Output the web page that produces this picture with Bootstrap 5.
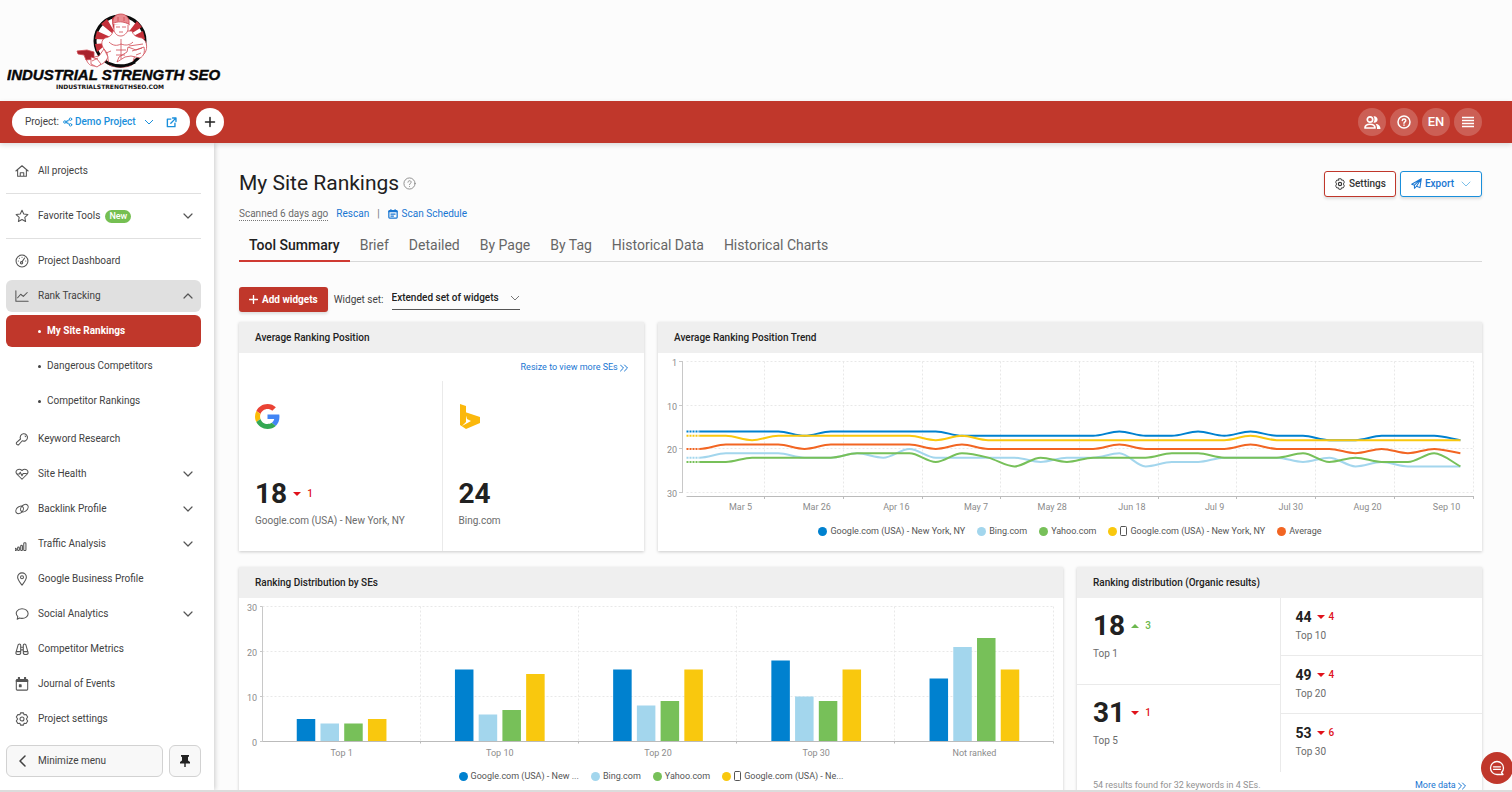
<!DOCTYPE html>
<html lang="en">
<head>
<meta charset="utf-8">
<meta name="viewport" content="width=device-width, initial-scale=1">
<title>My Site Rankings</title>
<link rel="stylesheet" href="https://cdn.jsdelivr.net/npm/bootstrap@5.3.0/dist/css/bootstrap.min.css">
<style>
:root { --brand:#c0372b; --link:#1976d2; --sky:#1a8fdb; --ink:#212121; --body:#424242; --muted:#6b6b6b; --faint:#929292; }
body { font-family:Roboto,"Liberation Sans",sans-serif; font-size:10px; line-height:16px; color:var(--body); background:#fcfcfc; height:100vh; overflow:hidden; border-bottom:2px solid #dcdcdc; }
a { text-decoration:none; color:var(--link); }
svg.ic { fill:none; stroke:currentColor; stroke-width:1.5; stroke-linecap:round; stroke-linejoin:round; flex:none; }
.brand-head { height:101px; padding-left:7px; }
.topbar { background:var(--brand); height:42px; padding:0 30px 0 12px; box-shadow:0 2px 5px rgba(0,0,0,.14); z-index:3; gap:6px; }
.project-pill { background:#fff; height:28px; padding:0 13px; border-radius:14px; color:var(--body); }
.bare-select { border:0; background-color:transparent; padding:0 20px 0 0; font-size:10px; line-height:16px; appearance:none; background-repeat:no-repeat; background-position:right center; background-size:10px 10px; }
.project-select { color:var(--sky); font-weight:500; padding-right:18px; margin-left:2px; background-image:url("data:image/svg+xml,%3Csvg xmlns='http://www.w3.org/2000/svg' viewBox='0 0 10 10' fill='none' stroke='%231a8fdb'%3E%3Cpath d='M1 3l4 4 4-4'/%3E%3C/svg%3E"); }
.widget-select { color:var(--ink); font-weight:500; border-bottom:1px solid #555; padding-bottom:3px; margin-left:2px; background-image:url("data:image/svg+xml,%3Csvg xmlns='http://www.w3.org/2000/svg' viewBox='0 0 10 10' fill='none' stroke='%23777'%3E%3Cpath d='M1 2l4 4 4-4'/%3E%3C/svg%3E"); }
.round-btn { width:28px; height:28px; border:0; padding:0; border-radius:50%; background:rgba(255,255,255,.2); color:#fff; font-size:13px; font-weight:500; }
.round-btn.plus { background:#fff; color:#222; }
.sidebar { width:214px; background:#fff; padding:12px 13px 0 6px; box-shadow:1px 0 5px rgba(0,0,0,.2); z-index:2; }
.side-link { height:32px; margin-bottom:3px; padding:0 8px 0 9px; border-radius:6px; color:var(--body); gap:9px; }
.side-link svg { color:#555; }
.side-link.open { background:#e0e0e0; }
.side-sub { padding-left:32px; gap:6px; }
.side-sub::before { content:""; width:3px; height:3px; border-radius:50%; background:currentColor; }
.side-sub.current { background:var(--brand); color:#fff; font-weight:700; }
.group-end { margin-bottom:6px; }
.side-rule { border-top:1px solid #e0e0e0; margin:6px 0; }
.badge-new { background:#75bf52; color:#fff; font-size:9px; line-height:13px; padding:0 4px; border-radius:7px; font-weight:500; margin-left:-4px; }
.side-foot { margin-top:10px; gap:6px; }
.side-btn { height:32px; border:1px solid #d2d2d2; background:#f8f8f8; border-radius:6px; color:var(--body); padding:0 9px; }
.main-area { padding:27px 30px 0 25px; overflow:hidden; min-width:0; }
.page-title { font-size:21px; line-height:27px; font-weight:400; color:var(--ink); }
.act-btn { height:26px; background:#fff; border:1px solid var(--brand); border-radius:3px; padding:0 9px; font-weight:500; color:#333; gap:3px; box-shadow:0 2px 3px rgba(0,0,0,.12); }
.act-btn.export { border-color:var(--sky); color:var(--link); padding:0 10px; }
.meta-line { margin-top:9px; gap:8px; }
.scanned { border-bottom:1px dotted #777; color:var(--muted); line-height:13px; }
.tabs-line { border-bottom:1px solid #d8d8d8; margin-top:7px; }
.tab-link { font-size:14px; line-height:30px; color:#666; padding:1px 10px 0; margin-bottom:-1px; border-bottom:2px solid transparent; }
.tab-link.current { color:var(--ink); font-weight:500; border-color:#cf3a32; }
.widget-bar { gap:6px; margin-top:25px; }
.add-btn { height:25px; background:var(--brand); color:#fff; border:0; border-radius:3px; padding:0 10px; font-weight:700; gap:4px; box-shadow:0 2px 3px rgba(0,0,0,.12); }
.widgets { --bs-gutter-x:14px; --bs-gutter-y:16px; margin-top:-6px; }
.panel { background:#fff; height:229px; box-shadow:0 1px 3px rgba(0,0,0,.2); }
.panel h2 { font-size:10px; line-height:31px; font-weight:500; margin:0; padding-left:16px; background:#efefef; color:#222; }
.chart svg { display:block; width:100%; }
.chart text { font-size:9px; fill:#8c8c8c; font-family:Roboto,"Liberation Sans",sans-serif; }
.legend-line { font-size:9px; line-height:12px; color:#555; gap:12px; }
.legend-line i { width:9px; height:9px; border-radius:50%; flex:none; }
.legend-line span { gap:3px; }
.small-link { font-size:9px; line-height:12px; }
.more-row { padding-top:7px; }
.engine-cell { padding:23px 15px 0 16px; }
.engine-num { margin-top:49px; }
.engine-name { margin-top:3px; }
.big-num { font-size:28px; line-height:32px; font-weight:700; color:var(--ink); }
.mid-num { font-size:14px; line-height:18px; font-weight:700; color:var(--ink); }
.num-row { gap:6px; }
.delta { font-size:10px; line-height:12px; font-weight:500; gap:6px; }
.down { color:#e0121b; } .up { color:#6cb84e; }
.delta::before { content:""; border:4px solid transparent; border-bottom-width:0; border-top-color:currentColor; }
.delta.up::before { border:4px solid transparent; border-top-width:0; border-bottom-color:currentColor; }
.big-cell { height:87px; padding:12px 16px 0; }
.small-cell { height:58px; padding:10px 15px 0; }
.small-cell .num-row { gap:5px; }
.small-cell .delta { gap:4px; }
.small-cell .muted { margin-top:2px; }
.muted { color:var(--muted); } .faint { color:var(--faint); }
.rule-l { border-left:1px solid #eaeaea; } .rule-b { border-bottom:1px solid #eaeaea; }
.chat-btn { position:fixed; right:-1px; bottom:8px; width:32px; height:32px; border-radius:50%; border:0; padding:0; background:var(--brand); color:#fff; z-index:5; }
</style>
</head>
<body class="d-flex flex-column">

<header class="brand-head flex-shrink-0">
  <svg width="216" height="98" viewBox="0 0 216 98" role="img" aria-label="Industrial Strength SEO">
    <g transform="translate(-7 0)">
      <circle cx="120" cy="41" r="25" fill="#fff" stroke="#0a0a0a" stroke-width="3"/>
      <g fill="#c4303a">
        <path d="M118 38L101 24l6-5zM117 40L97 31l-2 8zM124 38l13-17 5 6zM126 40l17-9 2 8zM108 43l-13 1 2 8zM113 30l-1-12 5-2zM136 45l9-2v6z"/>
      </g>
      <g fill="#fff" stroke="#cf4650" stroke-width=".8" stroke-linejoin="round">
        <path d="M113 31c-1 4-3 6-8 7-4 2-4 7-1 11l3 4 2 12c7 3 17 3 23 0l3-10 8 0c5-4 5-14-1-17-6-1-9-3-10-7z"/>
        <path d="M114 24v7c2 4 4 5 7 5s6-3 7-6v-7z"/>
        <path d="M113 24c-1-7 3-10 8-10s9 4 8 10c-5-2-11-2-16 0z" fill="#e88b90"/>
        <path d="M112 24c5-3 12-3 18 1"/>
        <path d="M104 49l-5 7-13 3c2 5 4 7 9 7 6 0 11-4 13-9z"/>
        <path d="M77 51l10-1 7 2v7l-8 1-2-5-6-1z" fill="#a8222c"/>
        <path d="M91 57l6 2 4 5-4 3-6-3z"/>
        <path d="M117 62l8-5 6-1 9 2c4-2 5-6 4-11l-8 3-8-3-1 5-8 5z"/>
        <path d="M129 46l14-2M132 51l10-3M121 39v20M109 42c4 4 8 4 12 2 5 2 9 1 12-2M116 50h10M116 55h9M116 27h4M122 27h4M119 32h4M118 17v4M124 17v4M106 53l5-2M92 61l6-3M136 55l5-2" fill="none"/>
      </g>
      <path d="M108 63c9 4 18 4 27-1" fill="none" stroke="#0a0a0a" stroke-width="3"/>
    </g>
    <text x="0" y="80" font-family="Liberation Sans, sans-serif" font-size="15" font-weight="700" font-style="italic" fill="#080808" stroke="#080808" stroke-width=".4">INDUSTRIAL STRENGTH SEO</text>
    <text x="49" y="89" font-family="DejaVu Sans, sans-serif" font-size="6" font-weight="700" fill="#111">INDUSTRIALSTRENGTHSEO.COM</text>
  </svg>
</header>

<div class="topbar d-flex align-items-center flex-shrink-0 position-relative">
  <div class="project-pill d-flex align-items-center">
    <label for="project">Project:</label>
    <svg class="ic ms-1" style="color:#1a8fdb" width="10" height="10" viewBox="0 0 16 16"><circle cx="3" cy="8" r="2"/><circle cx="12" cy="3.500" r="2"/><circle cx="12" cy="12.500" r="2"/><path d="M5 7l5-2.500M5 9l5 2.500M5 8h3"/></svg>
    <select id="project" class="bare-select project-select"><option>Demo Project</option></select>
    <a href="#" class="d-flex ms-2 ps-1" aria-label="Open project" style="color:#1a8fdb"><svg class="ic" width="11" height="11" viewBox="0 0 16 16"><path d="M7 3H2v11h11V9M9.500 1.500h5v5M14 2L7 9" stroke-width="2"/></svg></a>
  </div>
  <button class="round-btn plus d-flex align-items-center justify-content-center" aria-label="Add project"><svg class="ic" width="12" height="12" viewBox="0 0 12 12"><path d="M6 1.500v9M1.500 6h9"/></svg></button>
  <div class="d-flex ms-auto gap-1">
    <button class="round-btn d-flex align-items-center justify-content-center" aria-label="Users"><svg class="ic" width="17" height="15" viewBox="0 0 17 15"><circle cx="6" cy="4.500" r="2.700" stroke-width="1.700"/><path d="M1 13c0-5 10-5 10 0z" stroke-width="1.700"/><path d="M9.500 1.300a3.300 3.300 0 1 1 0 6.400c1.300-2 1.300-4.400 0-6.400zM11.500 8.700c3.500.3 5 2.300 5 5.300H13c0-2-.2-3.800-1.500-5.300z" fill="currentColor" stroke="none"/></svg></button>
    <button class="round-btn d-flex align-items-center justify-content-center" aria-label="Help"><svg class="ic" width="14" height="14" viewBox="0 0 14 14"><circle cx="7" cy="7" r="6"/><path d="M5.300 5.600c0-2.200 3.500-2.200 3.500 0C8.800 6.800 7 6.900 7 8.200M7 10.100v.1"/></svg></button>
    <button class="round-btn">EN</button>
    <button class="round-btn d-flex align-items-center justify-content-center" aria-label="Menu"><svg class="ic" width="12" height="12" viewBox="0 0 12 12"><path d="M0 1.500h12M0 4.500h12M0 7.500h12M0 10.500h12" stroke-linecap="butt"/></svg></button>
  </div>
</div>

<div class="d-flex flex-grow-1 overflow-hidden">
<nav class="sidebar flex-shrink-0" id="sidebar" aria-label="Main"></nav>

<main class="main-area flex-grow-1">
  <div class="d-flex align-items-center">
    <h1 class="page-title m-0">My Site Rankings</h1>
    <svg class="ic ms-1" style="color:#888" width="13" height="13" viewBox="0 0 14 14"><g stroke-width="1"><circle cx="7" cy="7" r="6"/><path d="M5.300 5.600c0-2.200 3.500-2.200 3.500 0C8.800 6.800 7 6.900 7 8.200M7 10.100v.1"/></g></svg>
    <button class="act-btn ms-auto d-flex align-items-center"><svg class="ic" width="12" height="12" viewBox="0 0 16 16"><path stroke-width="1.200" d="M6.500 1h3l.6 2 2.100-.3 1.600 2.700L12.500 8l1.300 2.600-1.600 2.700-2.100-.3-.6 2h-3l-.6-2-2.100.3-1.600-2.700L3.500 8 2.200 5.400l1.600-2.700 2.100.3z"/><circle cx="8" cy="8" r="2.200"/></svg>Settings</button>
    <button class="act-btn export ms-1 d-flex align-items-center"><svg class="ic" width="11" height="11" viewBox="0 0 16 16"><path d="M1 9l14-8-2 13-5-2-3 3v-4.500zM5 10.500L15 1 8 12"/></svg>Export<svg class="ic ms-1" width="10" height="10" viewBox="0 0 10 10" style="color:#7cc0ea"><path d="M1 3l4 4 4-4" stroke-width="1"/></svg></button>
  </div>
  <div class="meta-line d-flex align-items-center">
    <span class="scanned">Scanned 6 days ago</span>
    <a href="#">Rescan</a><span class="text-secondary">|</span>
    <a href="#" class="d-flex align-items-center"><svg class="ic me-1" width="10" height="10" viewBox="0 0 12 12"><rect x="1" y="2" width="10" height="9" rx="1"/><path d="M1 3h10M3.500 .8v2M8.500 .8v2M3.500 6h5M3.500 8.500h3"/></svg>Scan Schedule</a>
  </div>
  <nav class="tabs-line d-flex" aria-label="Reports">
    <a class="tab-link current" href="#">Tool Summary</a><a class="tab-link" href="#">Brief</a><a class="tab-link" href="#">Detailed</a><a class="tab-link" href="#">By Page</a><a class="tab-link" href="#">By Tag</a><a class="tab-link" href="#">Historical Data</a><a class="tab-link" href="#">Historical Charts</a>
  </nav>
  <div class="widget-bar d-flex align-items-center">
    <button class="add-btn d-flex align-items-center"><svg class="ic" width="9" height="9" viewBox="0 0 10 10"><path d="M5 .5v9M.5 5h9"/></svg>Add widgets</button>
    <label for="wset">Widget set:</label>
    <select id="wset" class="bare-select widget-select"><option>Extended set of widgets</option></select>
  </div>

  <div class="row widgets">
    <section class="col-4"><div class="panel d-flex flex-column">
      <h2>Average Ranking Position</h2>
      <div class="text-end px-3 pt-2"><a href="#" class="small-link d-block">Resize to view more SEs <svg class="ic" width="8" height="8" viewBox="0 0 8 8"><path d="M.5 1l3 3-3 3M4.500 1l3 3-3 3" stroke-width="1"/></svg></a></div>
      <div class="d-flex flex-grow-1 mt-2">
        <div class="col-6 engine-cell d-flex flex-column">
          <svg width="25" height="25" viewBox="0 0 48 48"><path fill="#EA4335" d="M24 9.500c3.540 0 6.710 1.220 9.210 3.600l6.850-6.850C35.900 2.380 30.470 0 24 0 14.620 0 6.510 5.380 2.560 13.220l7.980 6.190C12.430 13.720 17.740 9.500 24 9.500z"/><path fill="#4285F4" d="M46.980 24.550c0-1.570-.15-3.090-.38-4.550H24v9.020h12.940c-.58 2.960-2.260 5.480-4.780 7.180l7.730 6c4.510-4.180 7.090-10.360 7.090-17.650z"/><path fill="#FBBC05" d="M10.530 28.590c-.48-1.450-.76-2.990-.76-4.590s.27-3.140.76-4.590l-7.980-6.190C.92 16.460 0 20.120 0 24c0 3.880.92 7.540 2.560 10.780l7.970-6.190z"/><path fill="#34A853" d="M24 48c6.480 0 11.930-2.130 15.890-5.810l-7.730-6c-2.150 1.450-4.920 2.300-8.160 2.300-6.260 0-11.570-4.220-13.470-9.910l-7.980 6.190C6.510 42.620 14.620 48 24 48z"/></svg>
          <div class="engine-num num-row d-flex align-items-center"><span class="big-num">18</span><span class="delta down d-flex align-items-center">1</span></div>
          <div class="engine-name muted">Google.com (USA) - New York, NY</div>
        </div>
        <div class="col-6 engine-cell rule-l d-flex flex-column">
          <svg width="25" height="25" viewBox="0 0 25 25"><path fill="#fbb80c" d="M1 0l6 2v16l-4 4 9-5-4-2-2-7 15 5v6L7 25l-6-4z"/></svg>
          <div class="engine-num num-row d-flex"><span class="big-num">24</span></div>
          <div class="engine-name muted">Bing.com</div>
        </div>
      </div>
    </div></section>

    <section class="col-8"><div class="panel">
      <h2>Average Ranking Position Trend</h2>
      <div class="chart" id="trend"></div>
      <div class="legend-line d-flex justify-content-center" id="legendTrend"></div>
    </div></section>

    <section class="col-8"><div class="panel">
      <h2>Ranking Distribution by SEs</h2>
      <div class="chart" id="bars"></div>
      <div class="legend-line d-flex justify-content-center" id="legendBars"></div>
    </div></section>

    <section class="col-4"><div class="panel">
      <h2>Ranking distribution (Organic results)</h2>
      <div class="d-flex">
        <div class="col-6" id="bigCells"></div>
        <div class="col-6 rule-l" id="smallCells"></div>
      </div>
      <div class="more-row d-flex px-3 small-link"><span class="faint">54 results found for 32 keywords in 4 SEs.</span><a href="#" class="ms-auto">More data <svg class="ic" width="8" height="8" viewBox="0 0 8 8"><path d="M.5 1l3 3-3 3M4.500 1l3 3-3 3" stroke-width="1"/></svg></a></div>
    </div></section>
  </div>
</main>
</div>

<button class="chat-btn d-flex align-items-center justify-content-center" aria-label="Chat"><svg class="ic" width="16" height="16" viewBox="0 0 16 16"><path d="M14 14.500H8A6.500 6.500 0 1 1 14.500 8c0 2-.7 3.300-2 4.500zM4.500 6.800h7M4.500 9.300h7" stroke-width="1.300"/></svg></button>

<script src="https://cdn.jsdelivr.net/npm/bootstrap@5.3.0/dist/js/bootstrap.bundle.min.js"></script>
<script>
const icons = {
  home:'<path d="M1 8l7-6 7 6M3 7v7h10V7M6 14v-4h4v4"/>',
  star:'<path d="M8 1.500l2 4.300 4.700.6-3.500 3.200.9 4.700L8 12l-4.100 2.300.9-4.700L1.300 6.400 6 5.800z"/>',
  dash:'<circle cx="8" cy="8" r="6.800"/><circle cx="7.500" cy="10" r="1.300"/><path d="M8 9l3-4.500M3.800 8h.1M5 4.800h.1M8 3.700h.1M12.200 8h.1"/>',
  line:'<path d="M1 2v12h14M3 10l3.500-4 3 2.500L14 4"/>',
  key:'<path d="M6.300 8a4.200 4.200 0 1 1 2 2L4.500 14.300c-1.500 1.200-4-.8-2.600-2.400z"/><path d="M11.500 4.500a1 1 0 0 1 .8.900"/>',
  heart:'<path d="M8 14L2 8C-.5 4.500 4 .5 8 4c4-3.500 8.500.5 6 4zM2.500 8H5l1-2 2 4 1.300-2.500H13"/>',
  link:'<ellipse cx="5.300" cy="9" rx="5" ry="3.500" transform="rotate(-45 5.300 9)"/><ellipse cx="10.700" cy="7" rx="5" ry="3.500" transform="rotate(-45 10.700 7)"/>',
  bars:'<rect x="0" y="13" width="1.500" height="2.500" rx=".7"/><rect x="3" y="11.500" width="2" height="4" rx="1"/><rect x="6.500" y="9.500" width="2" height="6" rx="1"/><rect x="10" y="6.500" width="2.500" height="9" rx="1"/>',
  pin:'<path d="M8 15C5 11 3 8.800 3 6a5 5 0 0 1 10 0c0 2.800-2 5-5 9z"/><circle cx="8" cy="6" r="1.700"/>',
  chat:'<path d="M2.500 14l.7-3C-1 6.500 3 2 8 2c4 0 7 2.500 7 5.700S11.500 13 8 13c-1 0-2 0-2.800-.4z"/>',
  bino:'<path d="M3.500 3.500C3.500 2 6.500 2 6.500 3.500V12.500c0 2.500-5.500 2.500-5.500 0zM12.500 3.500C12.500 2 9.500 2 9.500 3.500V12.500c0 2.500 5.500 2.500 5.500 0zM6.500 6h3M6.500 9h3M1.200 11h5M9.800 11h5"/>',
  cal:'<rect x="1.500" y="3" width="13" height="12" rx="1"/><path d="M2 4.500h12M4.500 1v2M11.500 1v2" stroke-width="2.500"/><path d="M5 9h2v2H5z" fill="currentColor"/>',
  gear:'<path d="M6.300 1h3.400l.7 2.200 2.300-.4 1.800 3L13 8l1.500 2.200-1.800 3-2.300-.4-.7 2.200H6.300l-.7-2.200-2.300.4-1.800-3L3 8 1.500 5.800l1.800-3 2.300.4z"/><circle cx="8" cy="8" r="2.300"/>'
};
const ic = (n, s = 14) => `<svg class="ic" width="${s}" height="${s}" viewBox="0 0 16 16"><g stroke-width="1.200">${icons[n]}</g></svg>`;
const chev = up => `<svg class="ic ms-auto" width="10" height="10" viewBox="0 0 10 10"><path stroke-width="1.200" d="${up ? 'M1 7l4-4 4 4' : 'M1 3l4 4 4-4'}"/></svg>`;
const item = (icon, text, arrow = '', cls = '') => `<a href="#" class="side-link d-flex align-items-center ${cls}">${ic(icon)}<span>${text}</span>${arrow}</a>`;
const sub = (text, cls = '') => `<a href="#" class="side-link side-sub d-flex align-items-center ${cls}">${text}</a>`;
const rule = '<div class="side-rule"></div>';
document.getElementById('sidebar').innerHTML =
  item('home', 'All projects') + rule +
  item('star', 'Favorite Tools', '<span class="badge-new">New</span>' + chev()) + rule +
  item('dash', 'Project Dashboard') + item('line', 'Rank Tracking', chev(true), 'open') +
  sub('My Site Rankings', 'current') + sub('Dangerous Competitors') + sub('Competitor Rankings', 'group-end') +
  item('key', 'Keyword Research') + item('heart', 'Site Health', chev()) + item('link', 'Backlink Profile', chev()) +
  item('bars', 'Traffic Analysis', chev()) + item('pin', 'Google Business Profile') + item('chat', 'Social Analytics', chev()) +
  item('bino', 'Competitor Metrics') + item('cal', 'Journal of Events') + item('gear', 'Project settings') +
  `<div class="side-foot d-flex"><button class="side-btn flex-grow-1 d-flex align-items-center"><svg class="ic me-2" width="14" height="12" viewBox="0 0 14 12"><path d="M9 1L4 6l5 5"/></svg>Minimize menu</button>
   <button class="side-btn" aria-label="Pin menu"><svg width="12" height="14" viewBox="0 0 12 14"><path d="M2 1h8v1.500L9 3v3.500l2 1.500v1.500H6.700V13H5.300V9.500H1V8l2-1.500V3l-1-.5z" fill="#222"/></svg></button></div>`;

const colors = { blue:'#0081cf', sky:'#a3d6ed', green:'#77c059', gold:'#f9c80e', orange:'#f26522' };
const legend = (id, rows) => document.getElementById(id).innerHTML = rows.map(([c, t, phone]) =>
  `<span class="d-flex align-items-center"><i style="background:${colors[c]}"></i>${phone ? '<svg class="ic" width="7" height="10" viewBox="0 0 7 10"><rect x=".5" y=".5" width="6" height="9" rx="1" stroke-width="1"/></svg>' : ''}${t}</span>`).join('');
legend('legendTrend', [['blue', 'Google.com (USA) - New York, NY'], ['sky', 'Bing.com'], ['green', 'Yahoo.com'], ['gold', 'Google.com (USA) - New York, NY', 1], ['orange', 'Average']]);
legend('legendBars', [['blue', 'Google.com (USA) - New ...'], ['sky', 'Bing.com'], ['green', 'Yahoo.com'], ['gold', 'Google.com (USA) - Ne...', 1]]);

const delta = d => `<span class="delta ${d > 0 ? 'up' : 'down'} d-flex align-items-center">${Math.abs(d)}</span>`;
document.getElementById('bigCells').innerHTML = [[18, 3, 'Top 1'], [31, -1, 'Top 5']].map(([n, d, t], i) =>
  `<div class="big-cell ${i ? '' : 'rule-b'}"><div class="num-row d-flex align-items-center"><span class="big-num">${n}</span>${delta(d)}</div><div class="muted mt-1">${t}</div></div>`).join('');
document.getElementById('smallCells').innerHTML = [[44, -4, 'Top 10'], [49, -4, 'Top 20'], [53, -6, 'Top 30']].map(([n, d, t], i) =>
  `<div class="small-cell ${i < 2 ? 'rule-b' : ''}"><div class="num-row d-flex align-items-center"><span class="mid-num">${n}</span>${delta(d)}</div><div class="muted">${t}</div></div>`).join('');

const series = [
  ['blue',  [16,16,16,16,17,16,16,16,16,16,17,17,17,17,17,17,16,17,17,16,17,16,17,17,18,18,17,17,17,18]],
  ['sky',   [22,21,21,21,22,22,21,22,20,22,22,22,22,23,22,22,21,24,23,23,22,22,22,23,22,24,23,24,24,24]],
  ['green', [23,23,22,22,22,22,21,21,21,23,21,22,24,22,23,22,22,22,21,21,22,22,22,21,23,22,23,23,21,24]],
  ['gold',  [17,17,18,17,17,17,17,17,17,18,17,18,18,18,18,18,18,18,18,18,18,17,18,18,18,18,18,18,18,18]],
  ['orange',[20,19,19,19,20,19,19,19,19,20,19,20,20,20,20,20,19,20,20,20,20,19,20,20,20,21,20,21,20,21]]
];
const months = ['Mar 5','Mar 26','Apr 16','May 7','May 28','Jun 18','Jul 9','Jul 30','Aug 20','Sep 10'];
const seg = (x1, y1, x2, y2, c = '#e8e8e8', dash = '2 2') => `<path d="M${x1} ${y1}L${x2} ${y2}" stroke="${c}" ${dash ? `stroke-dasharray="${dash}"` : ''}/>`;

// Smooth curve with level tangents at every local extreme
function curve(p) {
  const m = p.map((q, i) => {
    if (!i || i === p.length - 1) return 0;
    const a = q[1] - p[i-1][1], b = p[i+1][1] - q[1];
    return a * b <= 0 ? 0 : (a + b) / 2;
  });
  const e = p.length - 1; m[e] = (p[e][1] - p[e-1][1]);
  return 'M' + p[0] + p.slice(1).map((q, i) => {
    const o = p[i], h = (q[0] - o[0]) / 3;
    return `C${o[0] + h} ${o[1] + m[i] / 3} ${q[0] - h} ${q[1] - m[i+1] / 3} ${q[0]} ${q[1]}`;
  }).join('');
}
function drawTrend() {
  const el = document.getElementById('trend'), w = el.clientWidth, L = 28.5, R = w - 8.5, T = 8.5, k = 4.37, n = 30, st = (R - L) / n;
  let s = '';
  [0, 10, 20, 30].forEach(v => { const y = Math.round(T + v * k - .5) + .5; s += seg(L, y, R, y) + `<text x="19" y="${y + 4}" text-anchor="end">${v || 1}</text>` + seg(21, y, 25, y, '#c8c8c8', ''); });
  months.forEach((t, i) => { const x = Math.round(L + (i + 1) * 3 * st) - .5; s += seg(x, T, x, 139) + seg(x, 143, x, 146, '#bbb', '') + `<text x="${L + (i * 3 + 2.5) * st}" y="157" text-anchor="end">${t}</text>`; });
  s += seg(24.5, T, 24.5, 139, '#c8c8c8', '') + seg(L, 143.5, R, 143.5, '#bbb', '');
  series.forEach(([c, d]) => {
    const p = d.map((v, i) => [L + (i + .5) * st, T + v * k]);
    s += `<path d="${curve(p)}" stroke="${colors[c]}" stroke-width="2"/><path d="M${L} ${p[0][1]}H${p[0][0]}" stroke="${colors[c]}" stroke-width="2" stroke-dasharray="2 1"/>`;
  });
  el.innerHTML = `<svg height="172" fill="none">${s}</svg>`;
}
const groups = [['Top 1', 5,4,4,5], ['Top 10', 16,6,7,15], ['Top 20', 16,8,9,16], ['Top 30', 18,10,9,16], ['Not ranked', 14,21,23,16]];
function drawBars() {
  const el = document.getElementById('bars'), w = el.clientWidth, L = 23.5, R = w - 9.5, B = 143.5, k = 4.5, st = (R - L) / 5, slot = st * .15;
  let s = '';
  [0, 10, 20, 30].forEach(v => { const y = B - v * k; s += seg(L, y, R, y) + `<text x="18" y="${y + 4}" text-anchor="end">${v}</text>` + seg(21, y, L, y, '#c8c8c8', ''); });
  groups.forEach(([t, ...d], g) => {
    const c = L + (g + .5) * st, x = Math.round(L + (g + 1) * st) - .5;
    s += seg(x, 8.5, x, B) + seg(x, B, x, B + 2, '#bbb', '') + `<text x="${c}" y="158" text-anchor="middle">${t}</text>`;
    d.forEach((v, i) => s += `<rect x="${c + (i - 2) * slot + slot * .11}" y="${B - v * k}" width="${slot * .78}" height="${v * k}" fill="${Object.values(colors)[i]}"/>`);
  });
  s += seg(L, 8.5, L, B, '#c8c8c8', '') + seg(L, B, R, B, '#bbb', '');
  el.innerHTML = `<svg height="172" fill="none">${s}</svg>`;
}
const draw = () => { drawTrend(); drawBars(); };
draw(); addEventListener('resize', draw);
</script>
</body>
</html>
